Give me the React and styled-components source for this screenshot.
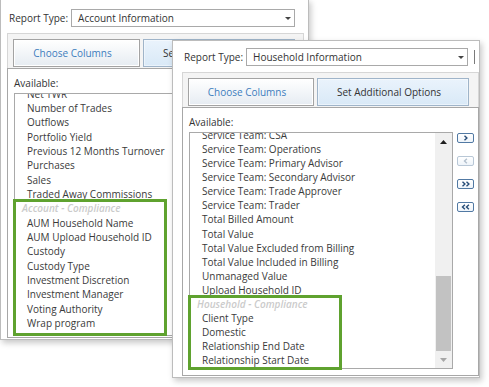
import React from "react";
import styled, { createGlobalStyle } from "styled-components";

const GlobalStyle = createGlobalStyle`
  html, body {
    margin: 0;
    padding: 0;
    background: #ffffff;
  }
  body {
    font-family: "Segoe UI", "Open Sans", sans-serif;
    font-size: 10px;
    color: #333333;
  }
`;

const accountColumns = [
  "Net TWR",
  "Number of Trades",
  "Outflows",
  "Portfolio Yield",
  "Previous 12 Months Turnover",
  "Purchases",
  "Sales",
  "Traded Away Commissions",
];

const accountCompliance = [
  "AUM Household Name",
  "AUM Upload Household ID",
  "Custody",
  "Custody Type",
  "Investment Discretion",
  "Investment Manager",
  "Voting Authority",
  "Wrap program",
];

const householdColumns = [
  "Service Team: CSA",
  "Service Team: Operations",
  "Service Team: Primary Advisor",
  "Service Team: Secondary Advisor",
  "Service Team: Trade Approver",
  "Service Team: Trader",
  "Total Billed Amount",
  "Total Value",
  "Total Value Excluded from Billing",
  "Total Value Included in Billing",
  "Unmanaged Value",
  "Upload Household ID",
];

const householdCompliance = [
  "Client Type",
  "Domestic",
  "Relationship End Date",
  "Relationship Start Date",
];

const Chevrons = ({ dir, count }) => {
  const xs = count === 2 ? [4.5, 8.5] : [6.5];
  const d = xs
    .map((x) =>
      dir === "right"
        ? `M${x} 1.8 L${x + 2.4} 4 L${x} 6.2`
        : `M${x + 2.4} 1.8 L${x} 4 L${x + 2.4} 6.2`
    )
    .join(" ");
  return (
    <svg width="15" height="8" viewBox="0 0 15 8">
      <path d={d} fill="none" stroke="currentColor" strokeWidth="1.4" />
    </svg>
  );
};

const Caret = ({ up }) => (
  <svg width="7" height="4" viewBox="0 0 7 4">
    <path d={up ? "M0 4 L3.5 0 L7 4 Z" : "M0 0 L7 0 L3.5 4 Z"} fill="currentColor" />
  </svg>
);

const Dialog = ({
  x, y, w, h, pad, reportType, selectW, tick, tabWidths,
  listH, rowH, cut, items, groupTitle, groupItems, groupPad,
}) => (
  <Window $x={x} $y={y} $w={w} $h={h} $pad={pad}>
    <Header>
      <Label>Report Type:</Label>
      <Select $w={selectW}>
        <span>{reportType}</span>
        <DropArrow>
          <svg width="6" height="3" viewBox="0 0 6 3">
            <path d="M0 0 H6 L3 3 Z" fill="currentColor" />
          </svg>
        </DropArrow>
      </Select>
      {tick && <Tick />}
    </Header>
    <Frame>
      <TabStrip>
        <Tab $w={tabWidths[0]}>Choose Columns</Tab>
        <Tab $w={tabWidths[1]} $active>Set Additional Options</Tab>
      </TabStrip>
      <Content>
        <Caption>Available:</Caption>
        <ListArea>
          <ListBox $h={listH}>
            <Items>
              <CutRow $h={cut}>
                <CutText $h={rowH}>{items[0]}</CutText>
              </CutRow>
              {items.slice(1).map((item) => (
                <Row key={item} $h={rowH} $indent={12}>{item}</Row>
              ))}
              <Group $padBottom={groupPad}>
                <GroupTitle $h={rowH} $indent={7}>{groupTitle}</GroupTitle>
                {groupItems.map((item) => (
                  <Row key={item} $h={rowH} $indent={12}>{item}</Row>
                ))}
              </Group>
            </Items>
            <ScrollBar>
              <ScrollArrow>
                <Caret up />
              </ScrollArrow>
              <Track>
                <Thumb $h={75} />
              </Track>
              <ScrollArrow $disabled>
                <Caret />
              </ScrollArrow>
            </ScrollBar>
          </ListBox>
          <MoveButtons>
            <MoveButton><Chevrons dir="right" count={1} /></MoveButton>
            <MoveButton $disabled><Chevrons dir="left" count={1} /></MoveButton>
            <MoveButton><Chevrons dir="right" count={2} /></MoveButton>
            <MoveButton><Chevrons dir="left" count={2} /></MoveButton>
          </MoveButtons>
        </ListArea>
      </Content>
    </Frame>
  </Window>
);

const App = () => (
  <>
    <GlobalStyle />
    <Desktop>
      <Dialog
        x={0} y={-1} w={309} h={341} pad="9px 4px 1px 6px"
        reportType="Account Information" selectW={224}
        tabWidths={[127, 152]} listH={243} rowH={14.35} cut={7}
        items={accountColumns} groupTitle="Account - Compliance"
        groupItems={accountCompliance} groupPad={3}
      />
      <Dialog
        x={172} y={40} w={308} h={338} pad="7px 0 1px 9px"
        reportType="Household Information" selectW={222} tick
        tabWidths={[126, 152]} listH={237} rowH={14.1} cut={9}
        items={householdColumns} groupTitle="Household - Compliance"
        groupItems={householdCompliance} groupPad={0}
      />
    </Desktop>
  </>
);

const Desktop = styled.div`
  position: relative;
  width: 489px;
  height: 387px;
  overflow: hidden;
  background: #ffffff;
`;

// the dialogs are windows lying on a canvas, so each one is placed by coordinates
const Window = styled.div`
  position: absolute;
  left: ${(p) => p.$x}px;
  top: ${(p) => p.$y}px;
  width: ${(p) => p.$w}px;
  height: ${(p) => p.$h}px;
  box-sizing: border-box;
  display: flex;
  flex-direction: column;
  padding: ${(p) => p.$pad};
  background: #ffffff;
  border: 1px solid #bcbcbc;
  box-shadow: 2px 3px 6px rgba(0, 0, 0, 0.22);
`;

const Header = styled.div`
  display: flex;
  align-items: center;
  height: 18px;
  padding-left: 2px;
  margin-bottom: 6px;
`;

const Label = styled.span`
  margin-right: 3px;
  white-space: nowrap;
  line-height: 14px;
`;

const Select = styled.div`
  box-sizing: border-box;
  width: ${(p) => p.$w}px;
  height: 18px;
  flex-shrink: 0;
  display: flex;
  align-items: center;
  justify-content: space-between;
  padding: 0 3px 0 6px;
  border: 1px solid #a9a9a9;
  background: #ffffff;
  white-space: nowrap;
`;

const DropArrow = styled.span`
  display: flex;
  color: #444444;
`;

const Tick = styled.span`
  width: 1px;
  height: 14px;
  margin-left: 6px;
  background: #7a7a7a;
`;

const Frame = styled.div`
  flex: 1;
  display: flex;
  flex-direction: column;
  border: 1px solid #d6d6d6;
  background: #f4f4f4;
`;

const TabStrip = styled.div`
  display: flex;
  gap: 3px;
  padding: 5px 0 1px 5px;
`;

const Tab = styled.div`
  box-sizing: border-box;
  width: ${(p) => p.$w}px;
  height: 28px;
  flex-shrink: 0;
  display: flex;
  align-items: center;
  justify-content: center;
  padding-right: 8px;
  white-space: nowrap;
  border: 1px solid ${(p) => (p.$active ? "#9fb4c9" : "#a3a3a3")};
  box-shadow: inset 0 0 0 1px
    ${(p) => (p.$active ? "rgba(255, 255, 255, 0.45)" : "#ffffff")};
  background: ${(p) =>
    p.$active
      ? "linear-gradient(#eaf3fc, #d9e9f7)"
      : "linear-gradient(#ffffff, #e6ecf2)"};
  color: ${(p) => (p.$active ? "#333333" : "#3d7dbd")};
`;

const Content = styled.div`
  flex: 1;
  margin: 0 -1px -1px;
  padding: 7px 6px 0;
  border: 1px solid #a7a7a7;
  background: #ffffff;
`;

const Caption = styled.div`
  line-height: 14px;
  margin-bottom: 3px;
`;

const ListArea = styled.div`
  display: flex;
  align-items: flex-start;
`;

const ListBox = styled.div`
  box-sizing: border-box;
  width: 264px;
  height: ${(p) => p.$h}px;
  flex-shrink: 0;
  display: flex;
  border: 1px solid #a9a9a9;
  background: #ffffff;
`;

const Items = styled.div`
  flex: 1;
  min-width: 0;
`;

const Row = styled.div`
  height: ${(p) => p.$h}px;
  line-height: ${(p) => p.$h}px;
  padding-left: ${(p) => p.$indent}px;
  white-space: nowrap;
  color: #3a3a3a;
`;

const CutRow = styled.div`
  height: ${(p) => p.$h}px;
  overflow: hidden;
  display: flex;
  align-items: flex-end;
  padding-left: 12px;
  white-space: nowrap;
  color: #3a3a3a;
`;

const CutText = styled.span`
  flex-shrink: 0;
  line-height: ${(p) => p.$h}px;
`;

const Group = styled.div`
  width: 150px;
  padding-bottom: ${(p) => p.$padBottom}px;
  outline: 3px solid #5fa22f;
  outline-offset: -1px;
`;

const GroupTitle = styled(Row)`
  font-style: italic;
  font-weight: 600;
  color: #cbcbcb;
`;

const ScrollBar = styled.div`
  width: 17px;
  flex-shrink: 0;
  display: flex;
  flex-direction: column;
  background: #f0f0f0;
`;

const ScrollArrow = styled.div`
  height: 17px;
  display: flex;
  align-items: center;
  justify-content: center;
  color: ${(p) => (p.$disabled ? "#a6a6a6" : "#1e1e1e")};
`;

const Track = styled.div`
  flex: 1;
  display: flex;
  flex-direction: column;
  justify-content: flex-end;
  align-items: center;
`;

const Thumb = styled.div`
  width: 15px;
  height: ${(p) => p.$h}px;
  background: #c2c2c2;
`;

const MoveButtons = styled.div`
  display: flex;
  flex-direction: column;
  gap: 13px;
  margin: 1px 0 0 4px;
`;

const MoveButton = styled.div`
  box-sizing: border-box;
  width: 17px;
  height: 10px;
  display: flex;
  align-items: center;
  justify-content: center;
  border: 1px solid ${(p) => (p.$disabled ? "#b8c7d6" : "#5179a3")};
  border-radius: 2px;
  background: linear-gradient(#ffffff, #eef4fa);
  color: ${(p) => (p.$disabled ? "#b3c0ce" : "#274d78")};
`;

export default App;
